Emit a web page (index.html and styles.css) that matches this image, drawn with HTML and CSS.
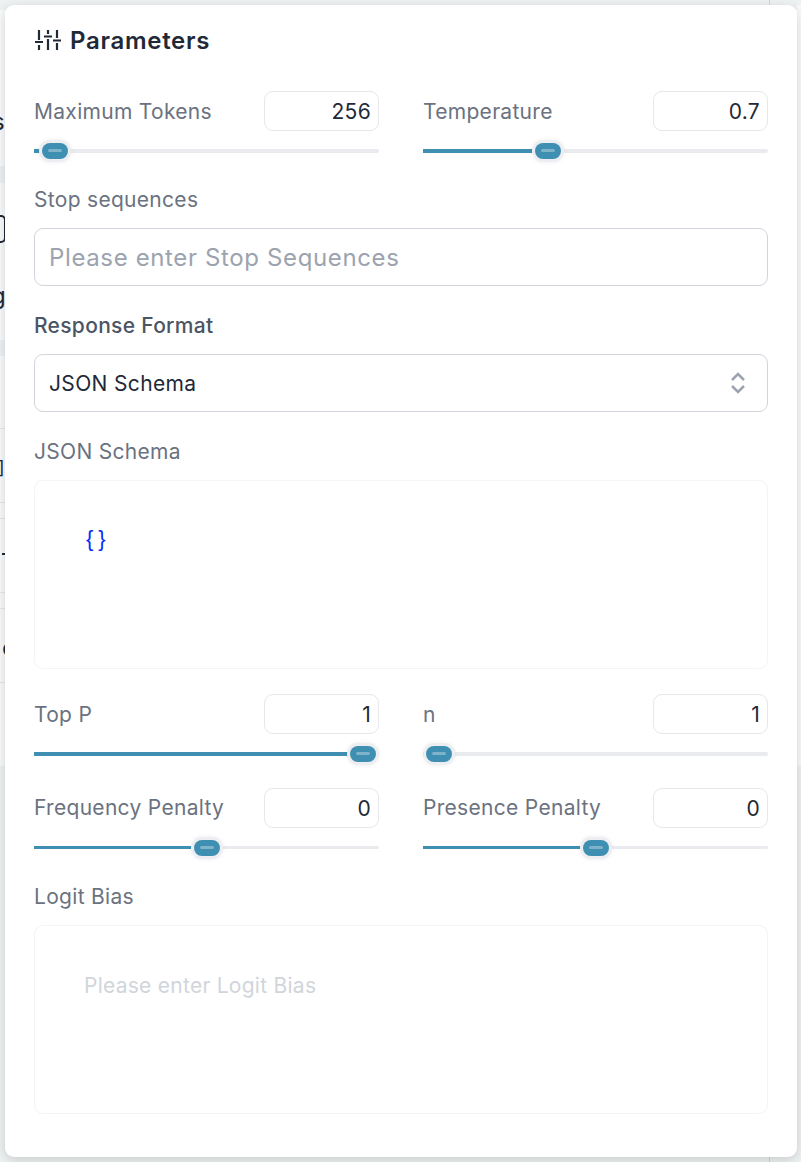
FILE: index.html
```html
<!DOCTYPE html>
<html lang="en">
<head>
    <meta charset="UTF-8">
    <title>Parameters</title>
    <link rel="stylesheet" href="styles.css">
</head>

<body>

<!-- Page behind the popover, only its edges show -->
<div class="backdrop">
    <div class="band-top"></div>
    <div class="strip-left"></div>
    <div class="strip-right"></div>
    <div class="band-bottom"></div>
    <div class="band band-a"></div>
    <div class="band band-b"></div>
    <div class="rule rule-a"></div>
    <div class="rule rule-b"></div>
    <div class="rule rule-c"></div>
    <div class="rule rule-d"></div>
    <div class="rule rule-e"></div>
    <div class="rule rule-f"></div>
    <div class="tick tick-top"></div>
    <div class="tick tick-bottom"></div>
    <span class="peek peek-s">s</span>
    <span class="peek peek-g">g</span>
    <span class="peek peek-b">]</span>
    <span class="peek peek-c">c</span>
    <div class="peek-box"></div>
    <div class="peek-dash"></div>
</div>

<section class="panel">
    <h2 class="panel-title">
        <svg class="title-icon" width="28" height="22" viewBox="0 0 28 22" fill="none" stroke="#1f2937" stroke-width="2.200">
            <path d="M5 1v10M5 16v5M1 13h8M14 1v4M14 10v11M10 7.500h8M23 1v8M23 14v7M19 11.500h8"/>
        </svg>
        Parameters
    </h2>

    <div class="slider-grid first">
        <div class="slider-field">
            <div class="slider-head">
                <label class="field-label">Maximum Tokens</label>
                <input class="num-input" type="text" value="256">
            </div>
            <div class="track"><div class="fill" style="width: 6.1%"></div><div class="thumb" style="left: 6.1%"></div></div>
        </div>
        <div class="slider-field">
            <div class="slider-head">
                <label class="field-label">Temperature</label>
                <input class="num-input" type="text" value="0.7">
            </div>
            <div class="track"><div class="fill" style="width: 36.2%"></div><div class="thumb" style="left: 36.2%"></div></div>
        </div>
    </div>

    <label class="field-label block stop-label">Stop sequences</label>
    <input class="text-input" type="text" placeholder="Please enter Stop Sequences">

    <label class="field-label block dark format-label">Response Format</label>
    <div class="select-box">
        <span>JSON Schema</span>
        <svg width="16" height="22" viewBox="0 0 16 22" fill="none" stroke="#9ca3af" stroke-width="2.500">
            <path d="M2 8l6-6 6 6M2 14l6 6 6-6"/>
        </svg>
    </div>

    <label class="field-label block schema-label">JSON Schema</label>
    <div class="editor"><code class="code-text">{}</code></div>

    <div class="slider-grid second">
        <div class="slider-field">
            <div class="slider-head">
                <label class="field-label">Top P</label>
                <input class="num-input" type="text" value="1">
            </div>
            <div class="track"><div class="fill" style="width: 95.4%"></div><div class="thumb" style="left: 95.4%"></div></div>
        </div>
        <div class="slider-field">
            <div class="slider-head">
                <label class="field-label">n</label>
                <input class="num-input" type="text" value="1">
            </div>
            <div class="track"><div class="fill" style="width: 4.6%"></div><div class="thumb" style="left: 4.6%"></div></div>
        </div>
    </div>

    <div class="slider-grid third">
        <div class="slider-field">
            <div class="slider-head">
                <label class="field-label">Frequency Penalty</label>
                <input class="num-input" type="text" value="0">
            </div>
            <div class="track thin"><div class="fill" style="width: 50.1%"></div><div class="thumb" style="left: 50.1%"></div></div>
        </div>
        <div class="slider-field">
            <div class="slider-head">
                <label class="field-label">Presence Penalty</label>
                <input class="num-input" type="text" value="0">
            </div>
            <div class="track thin"><div class="fill" style="width: 50.1%"></div><div class="thumb" style="left: 50.1%"></div></div>
        </div>
    </div>

    <label class="field-label block logit-label">Logit Bias</label>
    <div class="editor logit"><span class="logit-hint">Please enter Logit Bias</span></div>
</section>

</body>
</html>
```

FILE: styles.css
```css
/* Page */
html, body {
    height: 100%;
}

body {
    margin: 0;
    height: 1162px;
    overflow: hidden;
    position: relative;
    font-family: Inter, "Noto Sans", sans-serif;
    background-color: #ffffff;
}

/* Page behind the popover */
.backdrop {
    position: absolute;
    inset: 0;
    overflow: hidden;
}

.band-top {
    position: absolute;
    left: 0;
    top: 0;
    width: 100%;
    height: 10px;
    background-color: #eef2f3;
}

.strip-left {
    position: absolute;
    left: 0;
    top: 10px;
    width: 5px;
    height: 756px;
    background-color: #f9fafb;
}

.strip-right {
    position: absolute;
    right: 0;
    top: 5px;
    width: 4px;
    height: 880px;
    background-color: #fafafa;
}

.band-bottom {
    position: absolute;
    left: 0;
    top: 766px;
    width: 100%;
    height: 396px;
    background-color: #eef2f3;
}

.band {
    position: absolute;
    left: 0;
    width: 5px;
    background-color: #eef1f3;
}

.band-a { top: 166px; height: 17px; }
.band-b { top: 340px; height: 16px; }

.rule {
    position: absolute;
    left: 0;
    width: 5px;
    height: 1px;
    background-color: #e5e7eb;
}

.rule-a { top: 428px; }
.rule-b { top: 502px; }
.rule-c { top: 518px; }
.rule-d { top: 592px; }
.rule-e { top: 608px; }
.rule-f { top: 682px; }

.tick {
    position: absolute;
    left: 769px;
    width: 1px;
    height: 6px;
    background-color: #d1d5db;
}

.tick-top { top: 0; }
.tick-bottom { bottom: 0; }

.peek {
    position: absolute;
    font-size: 24px;
    line-height: 24px;
    color: #1f2937;
}

.peek-s { left: -8px; top: 110px; }
.peek-g { left: -9px; top: 284px; }
.peek-b { left: -2px; top: 456px; font-size: 18px; }
.peek-c { left: 2px; top: 636px; }

.peek-box {
    position: absolute;
    left: -12px;
    top: 215px;
    width: 14px;
    height: 24px;
    border: 2px solid #1f2937;
    border-radius: 5px;
}

.peek-dash {
    position: absolute;
    left: 2px;
    top: 553px;
    width: 3px;
    height: 2px;
    background-color: #1f2937;
}

/* Popover */
.panel {
    position: relative;
    box-sizing: border-box;
    width: 792px;
    height: 1152px;
    margin: 5px 0 0 5px;
    padding: 0 29px;
    background-color: #ffffff;
    border-radius: 9px;
    box-shadow: 0 3px 12px rgba(0, 0, 0, 0.16);
}

.panel-title {
    display: flex;
    align-items: center;
    gap: 8px;
    height: 70px;
    margin: 0;
    font-size: 24px;
    font-weight: 600;
    letter-spacing: 0.7px;
    color: #1f2937;
}

/* Slider rows */
.slider-grid {
    display: grid;
    grid-template-columns: 345px 345px;
    column-gap: 44px;
}

.slider-grid.first { margin-top: 16px; }
.slider-grid.second { margin-top: 25px; }
.slider-grid.third { margin-top: 32px; }

.slider-head {
    display: flex;
    align-items: center;
    justify-content: space-between;
    height: 40px;
}

.slider-head .field-label {
    padding-top: 2px;
}

.slider-grid.third .field-label {
    padding-top: 0;
}

.field-label {
    font-size: 21px;
    line-height: 34px;
    letter-spacing: 0.3px;
    color: #6b7280;
}

.field-label.block {
    display: block;
}

.field-label.dark {
    font-weight: 500;
    color: #4b5563;
}

.stop-label { margin-top: 30px; }
.format-label { margin-top: 23px; }
.schema-label { margin-top: 23px; }
.logit-label { margin-top: 31px; }

.num-input {
    box-sizing: border-box;
    width: 115px;
    height: 40px;
    padding: 0 7px;
    border: 1.5px solid #e5e7eb;
    border-radius: 9px;
    font-family: inherit;
    font-size: 21px;
    letter-spacing: 0.3px;
    text-align: right;
    color: #1f2937;
    background-color: #ffffff;
}

/* Track with its filled part and thumb */
.track {
    position: relative;
    height: 4px;
    margin-top: 18px;
    border-radius: 2px;
    background-color: #e9ebef;
}

.track.thin {
    height: 3px;
    margin-top: 18px;
}

.fill {
    height: 100%;
    background-color: #3f8fb2;
}

.thumb {
    position: absolute;
    top: 50%;
    box-sizing: border-box;
    width: 26px;
    height: 16px;
    border-radius: 8px;
    background-color: #3f8fb2;
    box-shadow: 0 0 0 3px #eceef1, 0 0 4px 3px rgba(0, 0, 0, 0.08);
    transform: translate(-50%, -50%);
}

.thumb::after {
    content: "";
    position: absolute;
    left: 6px;
    top: 6px;
    width: 14px;
    height: 3px;
    border-radius: 2px;
    background-color: #7fb3ca;
}

/* Text input and select */
.text-input,
.select-box {
    box-sizing: border-box;
    width: 100%;
    height: 58px;
    margin-top: 11px;
    padding: 0 14px;
    border: 1.5px solid #d1d5db;
    border-radius: 9px;
    font-family: inherit;
    background-color: #ffffff;
}

.text-input {
    display: block;
    font-size: 24px;
    letter-spacing: 0.63px;
    color: #1f2937;
}

.text-input::placeholder {
    color: #9ca3af;
    opacity: 1;
}

.select-box {
    display: flex;
    align-items: center;
    justify-content: space-between;
    padding-right: 21px;
    font-size: 21px;
    letter-spacing: 0.35px;
    color: #1f2937;
}

/* Code editors */
.editor {
    box-sizing: border-box;
    height: 189px;
    margin-top: 11px;
    padding: 43px 49px 0;
    border: 1.5px solid #f3f4f6;
    border-radius: 9px;
}

.code-text {
    display: block;
    margin-left: 2px;
    font-family: "Liberation Sans", sans-serif;
    font-size: 22px;
    line-height: 30px;
    letter-spacing: 5px;
    color: #0431fa;
}

.logit {
    padding-top: 46px;
}

.logit-hint {
    font-size: 21px;
    line-height: 28px;
    letter-spacing: 0.26px;
    color: #d1d5db;
}
```
